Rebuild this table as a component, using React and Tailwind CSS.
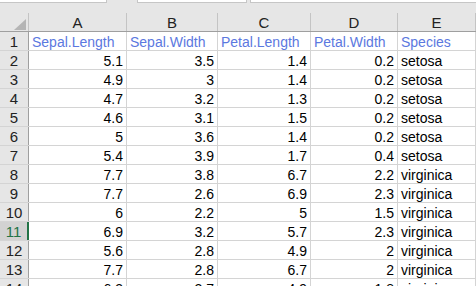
import React from 'react';

const cols = [
  { key: 'A', w: 'w-[98px]' },
  { key: 'B', w: 'w-[91px]' },
  { key: 'C', w: 'w-[93px]' },
  { key: 'D', w: 'w-[87px]' },
  { key: 'E', w: 'w-[78px]' },
];

const rows = [
  ['5.1', '3.5', '1.4', '0.2', 'setosa'],
  ['4.9', '3', '1.4', '0.2', 'setosa'],
  ['4.7', '3.2', '1.3', '0.2', 'setosa'],
  ['4.6', '3.1', '1.5', '0.2', 'setosa'],
  ['5', '3.6', '1.4', '0.2', 'setosa'],
  ['5.4', '3.9', '1.7', '0.4', 'setosa'],
  ['7.7', '3.8', '6.7', '2.2', 'virginica'],
  ['7.7', '2.6', '6.9', '2.3', 'virginica'],
  ['6', '2.2', '5', '1.5', 'virginica'],
  ['6.9', '3.2', '5.7', '2.3', 'virginica'],
  ['5.6', '2.8', '4.9', '2', 'virginica'],
  ['7.7', '2.8', '6.7', '2', 'virginica'],
  ['6.3', '2.7', '4.9', '1.8', 'virginica'],
];

const headers = ['Sepal.Length', 'Sepal.Width', 'Petal.Length', 'Petal.Width', 'Species'];

export default function App() {
  return (
    <div className="w-[476px] h-[286px] overflow-hidden bg-[#e6e6e6] text-[14px] leading-none" style={{ fontFamily: '"Liberation Sans", Arial, sans-serif' }}>
      {/* formula bar remnants */}
      <div className="flex h-[3px]">
        <div className="w-[107px] bg-white border-b border-r border-[#c6c6c6]" />
        <div className="w-[30px]" />
        <div className="w-[110px] bg-white border-b border-x border-[#c6c6c6]" />
        <div className="w-[3px]" />
        <div className="flex-1 bg-white border-b border-l border-[#c6c6c6]" />
      </div>
      <div className="h-[10px]" />

      {/* column headers */}
      <div className="flex h-[19px] border-b border-[#9f9f9f]">
        <div className="w-[29px] shrink-0 border-r border-[#c4c4c4] relative">
          <svg className="absolute left-[14px] top-[6px]" width="12" height="11" viewBox="0 0 12 11">
            <polygon points="12,0 12,11 0,11" fill="#b5b5b5" />
          </svg>
        </div>
        {cols.map(c => (
          <div key={c.key} className={`${c.w} shrink-0 border-r border-[#c4c4c4] flex items-center justify-center text-[#222] text-[15px] pt-[1px]`}>
            {c.key}
          </div>
        ))}
        <div className="flex-1" />
      </div>

      {/* row 1 */}
      <div className="flex h-[19px] border-b border-[#d4d4d4] bg-white">
        <div className="w-[29px] shrink-0 bg-[#e6e6e6] border-r border-[#9f9f9f] flex items-center justify-center text-[#222] text-[15px] pt-[1px]">1</div>
        {cols.map((c, i) => (
          <div key={c.key} className={`${c.w} shrink-0 border-r border-[#d4d4d4] flex items-center px-[3px] text-[#5b78e0] whitespace-nowrap overflow-visible pt-[1px]`}>
            {headers[i]}
          </div>
        ))}
        <div className="flex-1" />
      </div>

      {rows.map((r, idx) => {
        const n = idx + 2;
        const sel = n === 11;
        return (
          <div key={n} className="flex h-[19px] border-b border-[#d4d4d4] bg-white">
            <div className={`w-[29px] shrink-0 flex items-center justify-center text-[15px] pt-[1px] ${sel ? 'bg-[#d2d2d2] text-[#217346] border-r-2 border-[#217346]' : 'bg-[#e6e6e6] text-[#222] border-r border-[#9f9f9f]'}`}>
              {n}
            </div>
            {cols.map((c, i) => (
              <div key={c.key} className={`${c.w} shrink-0 border-r border-[#d4d4d4] flex items-center px-[3px] text-black whitespace-nowrap pt-[1px] ${i < 4 ? 'justify-end' : 'justify-start'}`}>
                {r[i]}
              </div>
            ))}
            <div className="flex-1" />
          </div>
        );
      })}
    </div>
  );
}
